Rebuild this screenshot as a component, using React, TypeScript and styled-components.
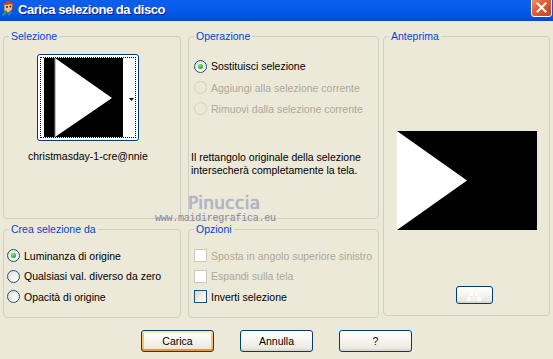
import React from "react";
import styled, { createGlobalStyle, css } from "styled-components";

const Global = createGlobalStyle`
  html, body { margin: 0; padding: 0; background: #ECE9D8; }
  body { font-family: "Liberation Sans", Arial, sans-serif; font-size: 10.5px; color: #000; }
  * { box-sizing: border-box; }
`;

const Window = styled.div`
  position: relative;
  width: 553px;
  height: 359px;
  overflow: hidden;
  background: #ECE9D8;
  display: flex;
  flex-direction: column;
`;

const TitleBar = styled.div`
  flex: none;
  height: 21px;
  display: flex;
  align-items: flex-start;
  padding-left: 1px;
  background: linear-gradient(to bottom, #0c5fea 0%, #0a5ced 30%, #0457e6 60%, #0250de 85%, #0a47c4 100%);
`;

const TitleIcon = styled.svg`
  flex: none;
  margin-top: 1px;
`;

const TitleText = styled.div`
  margin-left: 2px;
  margin-top: 2px;
  font-family: "Liberation Sans", Arial, sans-serif;
  font-weight: bold;
  font-size: 13px;
  letter-spacing: -0.45px;
  line-height: 15px;
  color: #fff;
  text-shadow: 1px 1px 0 #0a1e8c;
`;

const CloseBtn = styled.div`
  margin-left: auto;
  margin-right: 1px;
  margin-top: -5px;
  width: 21px;
  height: 22px;
  border: 1px solid #fff;
  border-radius: 3px;
  background: linear-gradient(135deg, #f0a080 0%, #e2643a 40%, #c9401c 100%);
  display: flex;
  align-items: center;
  justify-content: center;
  padding-top: 3px;
`;

const Body = styled.div`
  flex: 1;
  padding: 9px 4px 0 3px;
  display: flex;
  flex-direction: column;
`;

const Groups = styled.div`
  display: grid;
  grid-template-columns: 178px 7px 191px 4px 167px;
  grid-template-rows: 189px 95px;
  row-gap: 4px;
  grid-template-areas:
    "sel . op . prev"
    "crea . opz . prev";
`;

const Group = styled.fieldset<{ $area: string }>`
  grid-area: ${(p) => p.$area};
  margin: 0;
  padding: 0;
  min-width: 0;
  border: 1px solid #D0D0BF;
  border-radius: 4px;
  display: flex;
  flex-direction: column;
  ${(p) =>
    p.$area === "prev" &&
    css`
      align-self: start;
      height: 286px;
    `}
`;

const Legend = styled.legend`
  margin-left: 5px;
  padding: 0 2px;
  color: #0046D5;
  font-size: 10.5px;
  line-height: 13px;
`;

const SelContent = styled.div`
  padding: 11px 0 0 24px;
  display: flex;
`;

const ThumbCol = styled.div`
  display: flex;
  flex-direction: column;
  align-items: center;
`;

const Thumb = styled.div`
  width: 102px;
  height: 87px;
  border: 1px solid #003c74;
  border-radius: 3px;
  background: #fff;
  padding: 2px;
  display: flex;
`;

const Focus = styled.div`
  flex: 1;
  border: 1px dotted #000;
  display: flex;
  align-items: center;
  padding-left: 3px;
`;

const ThumbArrow = styled.div`
  flex: 1;
  display: flex;
  justify-content: flex-end;
  align-items: center;
  padding-right: 1px;
  padding-top: 3px;
`;

const Caption = styled.div`
  margin-top: 9px;
  line-height: 13px;
  white-space: nowrap;
`;

const List = styled.div<{ $pl: number; $pt: number }>`
  display: flex;
  flex-direction: column;
  padding-left: ${(p) => p.$pl}px;
  padding-top: ${(p) => p.$pt}px;
`;

const Row = styled.div<{ $h: number; $disabled?: boolean }>`
  height: ${(p) => p.$h}px;
  display: flex;
  align-items: center;
  gap: 4px;
  white-space: nowrap;
  color: ${(p) => (p.$disabled ? "#aca899" : "#000")};
`;

const Radio = styled.span<{ $checked?: boolean; $disabled?: boolean }>`
  position: relative;
  flex: none;
  width: 13px;
  height: 13px;
  border-radius: 50%;
  border: 1px solid ${(p) => (p.$disabled ? "#d3d1c6" : "#1c5180")};
  background: ${(p) =>
    p.$disabled
      ? "#ECE9D8"
      : "radial-gradient(circle at 70% 75%, #ffffff 0%, #f4f3ee 35%, #dcd9cd 100%)"};
  ${(p) =>
    p.$checked &&
    css`
      &::after {
        content: "";
        position: absolute;
        left: 3px;
        top: 3px;
        width: 5px;
        height: 5px;
        border-radius: 50%;
        background: radial-gradient(circle at 40% 35%, #a4ec9c 0%, #3cb83a 45%, #1f901f 100%);
      }
    `}
`;

const Check = styled.span<{ $disabled?: boolean }>`
  flex: none;
  width: 13px;
  height: 13px;
  border: 1px solid ${(p) => (p.$disabled ? "#cac8bb" : "#1c5180")};
  background: ${(p) =>
    p.$disabled ? "#fff" : "linear-gradient(135deg, #d8d6cc 0%, #f0efe9 55%, #ffffff 100%)"};
`;

const Info = styled.div`
  margin-top: 32px;
  padding-left: 2px;
  line-height: 13px;
`;

const PrevContent = styled.div`
  display: flex;
  flex-direction: column;
  align-items: center;
  padding-top: 88px;
`;

const PrevImage = styled.svg`
  display: block;
`;

const SmallBtn = styled.div`
  margin-top: 56px;
  margin-left: 15px;
  width: 37px;
  height: 18px;
  border: 1px solid #003c74;
  border-radius: 3px;
  background: linear-gradient(to bottom, #ffffff 0%, #f5f4f0 50%, #ebe8df 85%, #d6d0c5 100%);
  display: flex;
  align-items: flex-end;
  justify-content: center;
  padding-bottom: 1px;
`;

const Buttons = styled.div`
  margin-top: 12px;
  display: flex;
  justify-content: center;
  gap: 26px;
  padding-left: 1px;
`;

const Btn = styled.button<{ $default?: boolean }>`
  width: 73px;
  height: 22px;
  padding: 0;
  border: 1px solid #003c74;
  border-radius: 3px;
  font-family: "Liberation Sans", Arial, sans-serif;
  font-size: 10.5px;
  color: #000;
  background: linear-gradient(to bottom, #ffffff 0%, #f6f5f1 45%, #ece9e0 85%, #d8d2c6 100%);
  ${(p) =>
    p.$default &&
    css`
      box-shadow: inset 0 2px 0 #ffe7b3, inset 0 -2px 0 #eb9a2a, inset 2px 0 0 #f8c463,
        inset -2px 0 0 #f8c463;
    `}
`;

const Watermark = styled.div`
  position: absolute;
  left: 155px;
  top: 195px;
  display: flex;
  flex-direction: column;
  pointer-events: none;
`;

const WmName = styled.div`
  margin-left: 33px;
  font-family: "DejaVu Sans", sans-serif;
  font-size: 17px;
  line-height: 17px;
  height: 17px;
  letter-spacing: 0.3px;
  color: #b4b4cc;
  text-shadow: 0 0 1px #9090ac;
`;

const WmUrl = styled.div`
  margin-top: 3px;
  font-family: "Liberation Mono", monospace;
  font-size: 10px;
  line-height: 8px;
  height: 8px;
  letter-spacing: -0.25px;
  color: #85859a;
`;

export default function App() {
  return (
    <>
      <Global />
      <Window>
        <TitleBar>
          <TitleIcon width="15" height="16" viewBox="0 0 15 16">
            <path d="M3 3 L9 1 L12 4 L11 9 L7 12 L3 10 Z" fill="#f2c28c" stroke="#8a4a1c" strokeWidth="0.8" />
            <path d="M2 3 L6 0 L11 1 L13 4 L9 3 L5 4 Z" fill="#c2411c" />
            <circle cx="6" cy="6" r="0.9" fill="#1a1a1a" />
            <circle cx="9.5" cy="5.5" r="0.9" fill="#1a1a1a" />
            <path d="M1 14 L5 9 L6.5 10.5 L2.5 15 Z" fill="#2faa3a" />
            <path d="M6 13 L10 10 L11 12 L8 15 Z" fill="#3b6fe0" />
          </TitleIcon>
          <TitleText>Carica selezione da disco</TitleText>
          <CloseBtn>
            <svg width="11" height="11" viewBox="0 0 11 11">
              <path d="M1.5 1.5 L9.5 9.5 M9.5 1.5 L1.5 9.5" stroke="#fff" strokeWidth="2" strokeLinecap="square" />
            </svg>
          </CloseBtn>
        </TitleBar>
        <Body>
          <Groups>
            <Group $area="sel">
              <Legend>Selezione</Legend>
              <SelContent>
                <ThumbCol>
                  <Thumb>
                    <Focus>
                      <svg width="79" height="79" viewBox="0 0 79 79">
                        <rect width="79" height="79" fill="#000" />
                        <path d="M11 0 L68 40 L11 79 Z" fill="#fff" />
                        <line x1="11" y1="0" x2="11" y2="79" stroke="#888" strokeWidth="1" />
                      </svg>
                      <ThumbArrow>
                        <svg width="5" height="3" viewBox="0 0 5 3">
                          <path d="M0 0 H5 L2.5 3 Z" fill="#000" />
                        </svg>
                      </ThumbArrow>
                    </Focus>
                  </Thumb>
                  <Caption>christmasday-1-cre@nnie</Caption>
                </ThumbCol>
              </SelContent>
            </Group>

            <Group $area="op">
              <Legend>Operazione</Legend>
              <List $pl={5} $pt={12}>
                <Row $h={22}>
                  <Radio $checked />
                  Sostituisci selezione
                </Row>
                <Row $h={21} $disabled>
                  <Radio $disabled />
                  Aggiungi alla selezione corrente
                </Row>
                <Row $h={21} $disabled>
                  <Radio $disabled />
                  Rimuovi dalla selezione corrente
                </Row>
              </List>
              <Info>
                Il rettangolo originale della selezione
                <br />
                intersecherà completamente la tela.
              </Info>
            </Group>

            <Group $area="prev">
              <Legend>Anteprima</Legend>
              <PrevContent>
                <PrevImage width="140" height="99" viewBox="0 0 140 99">
                  <rect width="140" height="99" fill="#000" />
                  <path d="M0 0 L70 49.5 L0 99 Z" fill="#fff" />
                </PrevImage>
                <SmallBtn>
                  <svg width="14" height="10" viewBox="0 0 14 10">
                    <rect x="3" y="1" width="3" height="3" fill="#fff" />
                    <rect x="8" y="1" width="3" height="3" fill="#fff" />
                    <rect x="0" y="5" width="4" height="4" fill="#fff" />
                    <rect x="5" y="5" width="4" height="4" fill="#f4f4f4" />
                    <rect x="10" y="5" width="4" height="4" fill="#fff" />
                  </svg>
                </SmallBtn>
              </PrevContent>
            </Group>

            <Group $area="crea">
              <Legend>Crea selezione da</Legend>
              <List $pl={3} $pt={9}>
                <Row $h={21}>
                  <Radio $checked />
                  Luminanza di origine
                </Row>
                <Row $h={20.5}>
                  <Radio />
                  Qualsiasi val. diverso da zero
                </Row>
                <Row $h={20.5}>
                  <Radio />
                  Opacità di origine
                </Row>
              </List>
            </Group>

            <Group $area="opz">
              <Legend>Opzioni</Legend>
              <List $pl={5} $pt={9}>
                <Row $h={21} $disabled>
                  <Check $disabled />
                  Sposta in angolo superiore sinistro
                </Row>
                <Row $h={20.5} $disabled>
                  <Check $disabled />
                  Espandi sulla tela
                </Row>
                <Row $h={20.5}>
                  <Check />
                  Inverti selezione
                </Row>
              </List>
            </Group>
          </Groups>

          <Buttons>
            <Btn $default>Carica</Btn>
            <Btn>Annulla</Btn>
            <Btn>?</Btn>
          </Buttons>
        </Body>

        <Watermark>
          <WmName>Pinuccia</WmName>
          <WmUrl>www.maidiregrafica.eu</WmUrl>
        </Watermark>
      </Window>
    </>
  );
}
